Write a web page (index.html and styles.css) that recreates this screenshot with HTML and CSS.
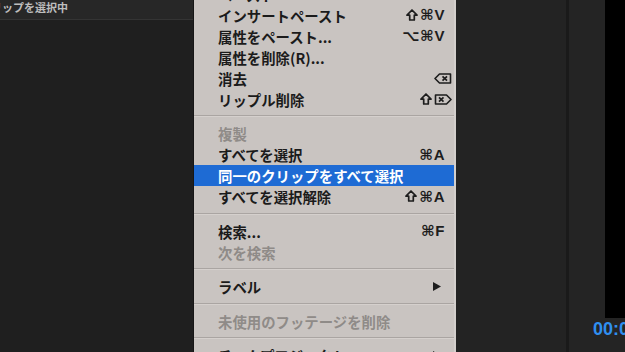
FILE: index.html
```html
<!DOCTYPE html>
<html lang="ja">
<head>
    <meta charset="UTF-8">
    <title>編集メニュー</title>
    <link rel="stylesheet" href="styles.css">
</head>
<body>
    <!-- 左パネル -->
    <div class="left-panel">
        <div class="panel-head"><span class="head-title">クリップを選択中</span></div>
        <div class="panel-body"></div>
    </div>

    <!-- コンテキストメニュー -->
    <ul class="menu">
        <li class="item"><span>ペースト</span><span class="key">⌘V</span></li>
        <li class="item"><span>インサートペースト</span>
            <span class="key-group">
                <svg class="shift" width="12" height="12" viewBox="0 0 12 12"><path d="M6 1 L11 6.2 H8.3 V11 H3.7 V6.2 H1 Z" fill="none" stroke="#1d1d1d" stroke-width="1.7" stroke-linejoin="round"/></svg>
                <span class="key">⌘V</span>
            </span>
        </li>
        <li class="item"><span>属性をペースト...</span><span class="key">⌥⌘V</span></li>
        <li class="item"><span>属性を削除(R)...</span></li>
        <li class="item"><span>消去</span>
            <svg class="icon-del" width="18" height="11" viewBox="0 0 18 11">
                <path d="M5.5 1 H16.5 V10 H5.5 L1 5.5 Z" fill="none" stroke="#1d1d1d" stroke-width="1.6" stroke-linejoin="round"/>
                <path d="M8.5 3.3 L13 7.7 M13 3.3 L8.5 7.7" stroke="#1d1d1d" stroke-width="1.7"/>
            </svg>
        </li>
        <li class="item"><span>リップル削除</span>
            <span class="key-group">
                <svg class="shift" width="12" height="12" viewBox="0 0 12 12"><path d="M6 1 L11 6.2 H8.3 V11 H3.7 V6.2 H1 Z" fill="none" stroke="#1d1d1d" stroke-width="1.7" stroke-linejoin="round"/></svg>
                <svg class="icon-del" width="18" height="11" viewBox="0 0 18 11">
                    <path d="M1.5 1 H12.5 L17 5.5 L12.5 10 H1.5 Z" fill="none" stroke="#1d1d1d" stroke-width="1.6" stroke-linejoin="round"/>
                    <path d="M5 3.3 L9.5 7.7 M9.5 3.3 L5 7.7" stroke="#1d1d1d" stroke-width="1.7"/>
                </svg>
            </span>
        </li>
        <li class="sep"></li>
        <li class="item disabled"><span>複製</span></li>
        <li class="item"><span>すべてを選択</span><span class="key">⌘A</span></li>
        <li class="item active"><span>同一のクリップをすべて選択</span></li>
        <li class="item"><span>すべてを選択解除</span>
            <span class="key-group">
                <svg class="shift" width="12" height="12" viewBox="0 0 12 12"><path d="M6 1 L11 6.2 H8.3 V11 H3.7 V6.2 H1 Z" fill="none" stroke="#1d1d1d" stroke-width="1.7" stroke-linejoin="round"/></svg>
                <span class="key">⌘A</span>
            </span>
        </li>
        <li class="sep"></li>
        <li class="item"><span>検索...</span><span class="key">⌘F</span></li>
        <li class="item disabled"><span>次を検索</span></li>
        <li class="sep"></li>
        <li class="item"><span>ラベル</span>
            <svg class="arrow" width="8" height="9" viewBox="0 0 8 9"><path d="M0 0 L8 4.5 L0 9 Z" fill="#1d1d1d"/></svg>
        </li>
        <li class="sep"></li>
        <li class="item disabled"><span>未使用のフッテージを削除</span></li>
        <li class="sep"></li>
        <li class="item"><span>チームプロジェクト</span>
            <svg class="arrow" width="8" height="9" viewBox="0 0 8 9"><path d="M0 0 L8 4.5 L0 9 Z" fill="#1d1d1d"/></svg>
        </li>
    </ul>

    <!-- 右側パネル -->
    <div class="right-panel">
        <div class="timeline"></div>
        <div class="split"></div>
        <div class="program">
            <div class="viewer">
                <div class="viewer-gap"></div>
                <div class="screen"></div>
            </div>
            <div class="timecode">00:00:00:00</div>
        </div>
    </div>
</body>
</html>
```

FILE: styles.css
```css
/* 全体 */
* {
    margin: 0;
    padding: 0;
    box-sizing: border-box;
}
html, body {
    width: 625px;
    height: 352px;
    overflow: hidden;
    background-color: #1e1e1e;
}
body {
    display: flex;
    font-family: "Noto Sans CJK JP", sans-serif;
}

/* 左パネル */
.left-panel {
    width: 194px;
    flex-shrink: 0;
    display: flex;
    flex-direction: column;
    border-right: 1px solid #161616;
}
.panel-head {
    height: 20px;
    background-color: #272727;
    border-bottom: 1px solid #343434;
    color: #bdbdbd;
    font-size: 11px;
    font-weight: 700;
    line-height: 15px;
    white-space: nowrap;
    overflow: hidden;
}
.head-title {
    display: block;
    margin-left: -20px;
}
.panel-body {
    flex: 1;
    background-color: #1f1f1f;
}

/* メニュー */
.menu {
    list-style: none;
    width: 262px;
    flex-shrink: 0;
    margin-top: -16.5px;
    background-color: #c9c4c1;
    border-right: 2px solid #d3cfcc;
    align-self: flex-start;
}
.item {
    height: 21px;
    padding: 0 9px 0 24px;
    display: flex;
    align-items: center;
    justify-content: space-between;
    font-size: 14.4px;
    font-weight: 600;
    color: #1b1b1b;
    white-space: nowrap;
}
.item.disabled {
    color: #8f8b88;
}
.item.active {
    background-color: #1e6bd4;
    color: #ffffff;
}
.sep {
    margin: 5.75px 0;
    border-top: 1px solid #aaa5a2;
    border-bottom: 1px solid #d5d0cd;
}
.key {
    font-family: "Liberation Sans", "DejaVu Sans", sans-serif;
    font-weight: bold;
    font-size: 15px;
    letter-spacing: 0.5px;
    color: #1d1d1d;
}
.key-group {
    display: flex;
    align-items: center;
    gap: 2px;
}
.shift {
    margin-top: -1px;
}
.icon-del {
    margin-right: -7px;
}
.arrow {
    margin-right: 4px;
}

/* 右パネル */
.right-panel {
    flex: 1;
    min-width: 0;
    display: flex;
    background-color: #232323;
}
.timeline {
    width: 110px;
    flex-shrink: 0;
}
.split {
    width: 3px;
    flex-shrink: 0;
    background-color: #1a1a1a;
}
.program {
    flex: 1;
    min-width: 0;
    display: flex;
    flex-direction: column;
    overflow: hidden;
    background-color: #242424;
}
.viewer {
    height: 318px;
    display: flex;
}
.viewer-gap {
    width: 36px;
    flex-shrink: 0;
}
.screen {
    flex: 1;
    background-color: #000000;
}
.timecode {
    padding: 1px 0 0 24px;
    color: #2f8ff0;
    font-family: "Liberation Sans", sans-serif;
    font-weight: bold;
    font-size: 18px;
    white-space: nowrap;
}
```
